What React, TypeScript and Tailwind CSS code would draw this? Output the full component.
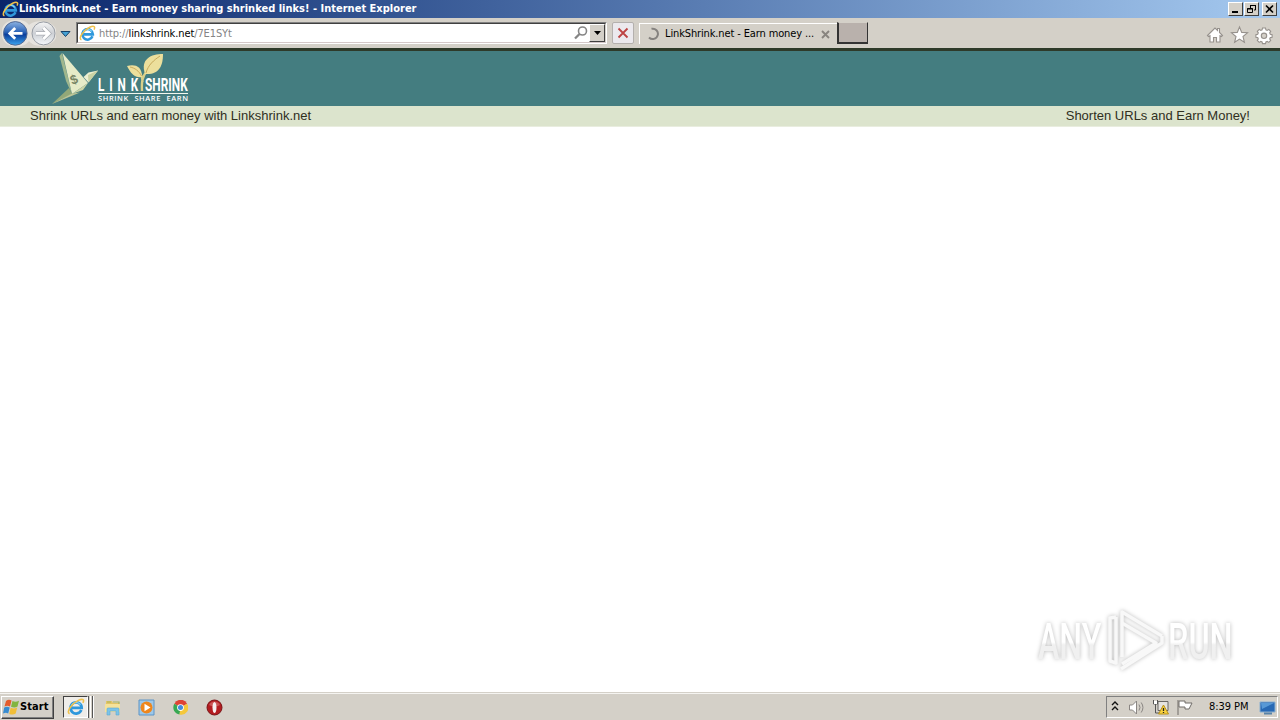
import type { ReactNode } from 'react'

const uiFont = "font-['DejaVu_Sans_Condensed','DejaVu_Sans',sans-serif]"

function IeIcon({ size, className = '' }: { size: number; className?: string }) {
  return (
    <svg width={size} height={size} viewBox="0 0 18 18" fill="none" className={`shrink-0 ${className}`}>
      <path d="M14.3 12A5.6 5.6 0 1 1 14.7 9.9H5" stroke="#2f98dc" strokeWidth="2.7" />
      <path d="M13.5 6.7A5.4 5.4 0 0 0 4.6 7" stroke="#8ad6f7" strokeWidth="1.2" />
      <path d="M2.6 15.7C-1.2 14.4 4.5 5.6 11.3 2.4c5-2.3 6.1-.4 4.6 2.4" stroke="#f0c14a" strokeWidth="1.6" />
    </svg>
  )
}

function WindowButton({ children, className = '' }: { children: ReactNode; className?: string }) {
  return (
    <div
      className={`flex h-[14px] w-[15px] items-center justify-center border border-t-white border-l-white border-r-[#404040] border-b-[#404040] bg-[#d4d0c8] ${className}`}
    >
      {children}
    </div>
  )
}

function TitleBar() {
  return (
    <div className="flex h-[18px] items-center bg-linear-to-r from-[#0a246a] to-[#a6caf0] pr-[3px] pl-[2px]">
      <IeIcon size={17} />
      <span className={`${uiFont} flex-1 text-[11px] leading-[18px] font-bold tracking-[0.005px] whitespace-nowrap text-white`}>
        LinkShrink.net - Earn money sharing shrinked links! - Internet Explorer
      </span>
      <WindowButton>
        <svg width="11" height="10" viewBox="0 0 11 10"><path d="M2 8h6" stroke="#000" strokeWidth="2" /></svg>
      </WindowButton>
      <WindowButton className="ml-px">
        <svg width="11" height="10" viewBox="0 0 11 10" fill="none" stroke="#000">
          <path d="M4.5 4V1.5h5V6H8M4 1.5h6M1.5 4.5h5v4h-5zM1 5h6" />
        </svg>
      </WindowButton>
      <WindowButton className="ml-[3px]">
        <svg width="11" height="10" viewBox="0 0 11 10"><path d="M2 1.5l7 7M9 1.5l-7 7" stroke="#000" strokeWidth="1.6" /></svg>
      </WindowButton>
    </div>
  )
}

function NavButtons() {
  return (
    <svg width="76" height="30" viewBox="0 18 76 30" className="shrink-0">
      <defs>
        <linearGradient id="back" x1="0" y1="0" x2="0" y2="1">
          <stop offset="0" stopColor="#8cb2e2" />
          <stop offset=".45" stopColor="#2a62b6" />
          <stop offset=".55" stopColor="#0b3e9c" />
          <stop offset="1" stopColor="#3ba5ee" />
        </linearGradient>
        <linearGradient id="forward" x1="0" y1="0" x2="0" y2="1">
          <stop offset="0" stopColor="#f5f5f5" />
          <stop offset=".5" stopColor="#cdd0d5" />
          <stop offset="1" stopColor="#f4f7fa" />
        </linearGradient>
      </defs>
      <path d="M2 30C3 18 24 17 29 25c5-5 22-6 27 4v9c-5 10-22 10-27 3-6 9-26 7-27-5z" fill="#e6e3de" />
      <circle cx="15.3" cy="33.4" r="11.8" fill="url(#back)" stroke="#536a94" strokeWidth="1" />
      <path d="M22.5 33.4H10M15.2 28l-5.4 5.4 5.4 5.4" fill="none" stroke="#fff" strokeWidth="2.8" />
      <circle cx="43.5" cy="33.4" r="11.5" fill="url(#forward)" stroke="#989da5" strokeWidth="1" />
      <path d="M36 33.4h13M43.3 27.7l5.7 5.7-5.7 5.7" fill="none" stroke="#a8acb2" strokeWidth="4.2" />
      <path d="M36 33.4h13M43.3 27.7l5.7 5.7-5.7 5.7" fill="none" stroke="#fff" strokeWidth="2.8" />
      <path d="M61 31.5h9l-4.5 5z" fill="#45a1d3" stroke="#174169" strokeWidth="1" />
    </svg>
  )
}

function AddressBar() {
  return (
    <div className="mt-[4px] flex h-[22px] w-[531px] shrink-0 border border-t-[#808080] border-l-[#808080] border-r-white border-b-white">
      <div className="flex min-w-0 flex-1 items-center border border-t-[#404040] border-l-[#404040] border-r-[#d4d0c8] border-b-[#d4c8c8] bg-white">
        <IeIcon size={17} className="ml-px" />
        <span className={`${uiFont} ml-[3px] flex-1 pt-[2px] text-[11px] tracking-[-0.11px] whitespace-nowrap text-[#848484]`}>
          http://<span className="text-black">linkshrink.net</span>/7E1SYt
        </span>
        <svg width="16" height="16" viewBox="0 0 16 16" fill="none" stroke="#858585">
          <circle cx="9.5" cy="6" r="4" strokeWidth="1.6" />
          <path d="M6.5 9L2 13.5" strokeWidth="2.3" />
        </svg>
        <div className="flex h-[18px] w-[16px] items-center justify-center border border-t-white border-l-white border-r-[#404040] border-b-[#404040] bg-[#d4d0c8]">
          <svg width="7" height="4" viewBox="0 0 7 4"><path d="M0 0h7L3.5 4z" /></svg>
        </div>
      </div>
    </div>
  )
}

function Toolbar() {
  return (
    <div className="flex h-[30px] items-start bg-[#d4d0c8]">
      <NavButtons />
      <AddressBar />
      <div className="mt-[4px] ml-[5px] flex h-[22px] w-[22px] shrink-0 items-center justify-center rounded-[2px] border border-[#b4b0ad] bg-[#ebe9ed]">
        <svg width="12" height="12" viewBox="0 0 12 12" fill="none" stroke="#bd4343" strokeWidth="1.8"><path d="M1.5 1.5l9 9M10.5 1.5l-9 9" /></svg>
      </div>
      <div className="mt-[5px] ml-[5px] flex h-[21px] w-[198px] shrink-0 items-center border-t border-l border-white pl-[6px]">
        <svg width="14" height="14" viewBox="0 0 14 14" fill="none" stroke="#85827f" strokeWidth="2" className="shrink-0"><path d="M5.5 1.8A5.2 5.2 0 1 1 3 10.5" /></svg>
        <span className={`${uiFont} ml-[5px] w-[156px] shrink-0 pt-px text-[11px] tracking-[-0.13px] whitespace-nowrap text-black`}>LinkShrink.net - Earn money ...</span>
        <svg width="9" height="9" viewBox="0 0 9 9" stroke="#88847f" strokeWidth="1.9" className="shrink-0"><path d="M1 1l7 7M8 1L1 8" /></svg>
      </div>
      <div className="mt-[4px] h-[22px] w-[31px] shrink-0 border-t border-r border-b-2 border-l-2 border-t-[#d4d0c8] border-r-[#333] border-b-[#333] border-l-[#333] bg-[#b9b1ac]" />
      <svg width="74" height="20" viewBox="0 0 74 20" className="mt-[7px] ml-auto shrink-0" fill="#fff" stroke="#96918c" strokeWidth="1.1">
        <path d="M1.5 10.5L9 3l2.5 2.4V3.5h2v4l3 3-1 1-1.5-.8V17H10.5v-4.5h-3V17H4v-6.3l-1.5.8z" />
        <path d="M33.5 2l2.2 5.4 5.8.4-4.5 3.7 1.4 5.8-4.9-3.2-4.9 3.2 1.4-5.8-4.5-3.7 5.8-.4z" />
        <path d="M56.5 3h3l.4 1.8 1.3.6 1.6-1 1.9 1.9-1 1.6.6 1.3 1.8.4v2.6l-1.8.4-.6 1.3 1 1.6-1.9 1.9-1.6-1-1.3.6-.4 1.6h-3l-.4-1.6-1.3-.6-1.6 1-1.9-1.9 1-1.6-.6-1.3-1.8-.4V9.6l1.8-.4.6-1.3-1-1.6 1.9-1.9 1.6 1 1.3-.6z" />
        <circle cx="58" cy="10.8" r="2.7" fill="#d4d0c8" />
      </svg>
    </div>
  )
}

function LinkShrinkLogo() {
  return (
    <svg width="144" height="55" viewBox="48 51 144 55" className="ml-[48px]">
      <path d="M59.5 56l2.5-3 10 41-6-13z" fill="#9fb68c" />
      <path d="M62.5 53L88 83l-16 11z" fill="#e6ebc8" />
      <path d="M72 94l16-11-5 7z" fill="#cbd4a6" />
      <path d="M83.5 77l5-4.5 9.5-2-9.5 12z" fill="#eef0d2" />
      <path d="M88 75l10-4.5-9.5 12z" fill="#cbd3a4" />
      <path d="M52 104l17-16 3 6z" fill="#93a878" />
      <path d="M52 104l20-10.5 8-1z" fill="#bdc596" />
      <text x="70.5" y="84" fontFamily="Liberation Sans" fontWeight="700" fontSize="13" fill="#788565" transform="rotate(-22 74 80)">$</text>
      <path d="M142 91c-.5-9 0-15 6-21M142.5 82c0-4-1-7-3-9" fill="none" stroke="#d9d08a" strokeWidth="2.4" />
      <path d="M142 77c-7 1-11-3-15-11 8-2 15 0 15 11z" fill="#ecdf9c" />
      <path d="M145 74c-5-15 6-20 18-20 0 12-4 21-18 20z" fill="#ecdf9c" />
      <path d="M130 67c5 1 9 4 11.500 9M146 73c2-8 8-13 14-17" fill="none" stroke="#c2a353" strokeWidth=".9" />
      <g fill="#fff" fontFamily="Roboto" fontWeight="700">
        <g transform="translate(98 91.3) scale(.62 1)">
          <text fontSize="19" textLength="65">LINK</text>
        </g>
        <g transform="translate(145 91.3) scale(.62 1)">
          <text fontSize="19" textLength="69" lengthAdjust="spacingAndGlyphs">SHRINK</text>
        </g>
      </g>
      <path d="M98 93.5h90" stroke="#f3f7ef" strokeWidth="1" />
      <text x="98" y="101" fill="#fff" fontFamily="Open Sans" fontWeight="600" fontSize="7.5" wordSpacing="3" textLength="90">SHRINK SHARE EARN</text>
    </svg>
  )
}

function Watermark() {
  return (
    <svg width="204" height="68" viewBox="1034 606 204 68" className="absolute top-[558px] right-[42px] drop-shadow-[0_0_2px_#bbb]">
      <defs>
        <linearGradient id="mark" x1="0" y1="0" x2="0" y2="1">
          <stop offset=".5" stopColor="#fff" />
          <stop offset=".55" stopColor="#f0f0f0" />
        </linearGradient>
      </defs>
      <g fill="url(#mark)" fontFamily="Roboto" fontWeight="500" fontSize="49">
        <text transform="translate(1038 659) scale(.68 1)" textLength="93" lengthAdjust="spacingAndGlyphs">ANY</text>
        <text transform="translate(1168 659) scale(.68 1)" textLength="95" lengthAdjust="spacingAndGlyphs">RUN</text>
      </g>
      <g fill="none" stroke="#f8f8f8" strokeWidth="3.5" strokeLinejoin="round">
        <path d="M1122 657v-45l40 24M1122 612v45" />
        <path d="M1116 617l-6 1v43l6 2v-46" />
        <path d="M1122 623l34 20-34 21M1121 669l41-26v-7" />
      </g>
    </svg>
  )
}

function Page() {
  return (
    <main className="relative flex min-h-0 flex-1 flex-col bg-white">
      <header className="h-[58px] shrink-0 border-t-[3px] border-[#2e3a29] bg-[#447d80]">
        <LinkShrinkLogo />
      </header>
      <div className="flex h-[21px] shrink-0 items-center justify-between border-b border-[#e9eddf] bg-[#dce4cd] px-[30px] pb-px font-['Liberation_Sans',sans-serif] text-[13px] text-[#302f1e]">
        <span>Shrink URLs and earn money with Linkshrink.net</span>
        <span>Shorten URLs and Earn Money!</span>
      </div>
      <Watermark />
    </main>
  )
}

function StartButton() {
  return (
    <div className="flex h-[23px] w-[53px] items-center border border-t-white border-l-white border-r-[#404040] border-b-[#404040] shadow-[inset_-1px_-1px_#808080]">
      <svg width="18" height="17" viewBox="0 0 18 17" className="shrink-0">
        <path d="M4 2c2-1.5 3.5-1.5 5.5-.5L8 7.5C6 6.500 4.500 6.500 2.500 7.500z" fill="#e45b2c" />
        <path d="M10.5 2c2 1 4 1 6.5-.3L15.5 7.5c-2 1.2-4 1.2-6.5.2z" fill="#82b541" />
        <path d="M2.2 8.5c2-1 3.5-1 5.5 0L6.200 14.5c-1.6-1-3.2-1-5.2 0z" fill="#378bd0" />
        <path d="M8.7 8.8c2 1 4 1 6.5-.2l-1.5 6c-2 1.3-4 1.3-6.5.3z" fill="#f1be38" />
      </svg>
      <span className={`${uiFont} text-[11px] font-bold tracking-[0.1px] text-black`}>Start</span>
    </div>
  )
}

function Taskbar() {
  return (
    <footer className="flex h-[28px] shrink-0 items-center border-t border-[#d4d0c8] bg-[#d4d0c8] pt-px pr-[2px] pl-px shadow-[inset_0_1px_#f5f4f1]">
      <StartButton />
      <div className="ml-[9px] flex h-[22px] w-[25px] items-center justify-center border border-t-[#404040] border-l-[#404040] border-r-white border-b-white bg-[#efede9]">
        <IeIcon size={18} />
      </div>
      <div className="h-[22px] w-[3px] border-r border-l border-r-white border-l-[#555]" />
      <div className="ml-px h-[22px] w-[2px] border-r border-l border-r-white border-l-[#555]" />
      <svg width="18" height="18" viewBox="0 0 18 18" className="ml-[10px]">
        <path d="M2 3h6l1 2h6v9H2z" fill="#e4c565" />
        <path d="M3 4h4M9 4h6v2" fill="none" stroke="#a9b45a" strokeWidth="1.2" />
        <path d="M1 6h15v8H1z" fill="#f5e29b" />
        <path d="M3 17v-6q0-1 1-1h10q1 0 1 1v6h-3v-4H6v4z" fill="#7cc3e8" stroke="#5ba9d0" strokeWidth=".6" />
      </svg>
      <svg width="17" height="17" viewBox="0 0 17 17" className="ml-[16px]">
        <path d="M1 1h15v15H1z" fill="#9dc8e9" stroke="#5d94c6" />
        <circle cx="8.5" cy="8.5" r="6" fill="#ee861c" />
        <path d="M6.5 4.8v7.4l6-3.7z" fill="#fff" />
      </svg>
      <svg width="15" height="15" viewBox="0 0 16 16" className="ml-[18px]">
        <path d="M8 8L1.5 4A7.5 7.5 0 0 1 15 4z" fill="#de4335" />
        <path d="M8 8l-1 7.5A7.5 7.5 0 0 1 1.5 4z" fill="#37a853" />
        <path d="M8 8l7-4a7.5 7.5 0 0 1-8 11.5z" fill="#f5c83b" />
        <circle cx="8" cy="8" r="3.6" fill="#fff" />
        <circle cx="8" cy="8" r="2.7" fill="#448bdd" />
      </svg>
      <svg width="17" height="17" viewBox="0 0 17 17" className="ml-[18px]">
        <circle cx="8.5" cy="8.5" r="7.5" fill="#b31c20" stroke="#791316" />
        <path d="M3 6a6 6 0 0 1 11 0q-5 3-11 0z" fill="#d97a78" opacity=".6" />
        <ellipse cx="8.5" cy="8.5" rx="2" ry="5.5" fill="#f6eeee" />
      </svg>
      <div className="ml-auto flex h-[22px] w-[172px] items-center border border-t-[#808080] border-l-[#808080] border-r-white border-b-white">
        <svg width="8" height="11" viewBox="0 0 8 11" className="mb-[2px] ml-[4px] shrink-0" fill="none" stroke="#111" strokeWidth="1.4"><path d="M1 4l3-3 3 3M1 9l3-3 3 3" /></svg>
        <svg width="18" height="17" viewBox="0 0 18 17" className="ml-[9px] shrink-0" fill="none" stroke="#8a8683">
          <path d="M1.5 6h3l4-4v13l-4-4h-3z" fill="#fff" />
          <path d="M11 5.5q2 3 0 6M13.2 3.5q3.5 5 0 10" />
        </svg>
        <svg width="18" height="18" viewBox="0 0 18 18" className="ml-[6px] shrink-0" fill="none">
          <path d="M6 3.5h10v9H6z" fill="#e5e3df" stroke="#696765" />
          <path d="M1.5 2v4h4V2M3.5 6v9h4" stroke="#555" />
          <path d="M2 3h3v3H2z" fill="#fff" />
          <path d="M11.5 7l5 9h-10z" fill="#f8d13f" stroke="#b79018" />
          <path d="M11.5 10v3M11.5 14v1" stroke="#222" strokeWidth="1.3" />
        </svg>
        <svg width="18" height="17" viewBox="0 0 18 17" className="ml-[6px] shrink-0" fill="#fff" stroke="#706d69">
          <path d="M2 1v15M3 2h6v2h7l-3 6H9V8H3z" />
        </svg>
        <span className={`${uiFont} ml-[15px] w-[43px] shrink-0 pt-px text-[11px] tracking-[-0.05px] whitespace-nowrap text-black`}>8:39 PM</span>
        <svg width="17" height="15" viewBox="0 0 17 15" className="ml-[7px] shrink-0">
          <path d="M1 2h15v10H1z" fill="#2869b4" stroke="#8ab0d1" />
          <path d="M2 3h13L3 9z" fill="#5899d6" />
          <path d="M5 13.5h8" stroke="#5983a7" strokeWidth="2" />
        </svg>
      </div>
    </footer>
  )
}

export default function App() {
  return (
    <div className="flex h-[720px] w-[1280px] flex-col overflow-hidden bg-white">
      <TitleBar />
      <Toolbar />
      <Page />
      <Taskbar />
    </div>
  )
}
